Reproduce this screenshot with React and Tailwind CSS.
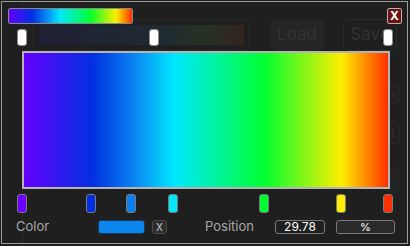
import React from 'react';

const grad =
  'linear-gradient(to right, #6400ff 0%, #0030e0 18.9%, #0a80f0 29.78%, #00e8ff 41.3%, #00ff30 66%, #ffee00 87.2%, #ff3000 100%)';

const stops = [
  { pos: 0, color: '#6a00ff' },
  { pos: 18.9, color: '#0030e0' },
  { pos: 29.78, color: '#0a80f0' },
  { pos: 41.3, color: '#00e8ff' },
  { pos: 66, color: '#00ff30' },
  { pos: 87.2, color: '#ffee00' },
  { pos: 100, color: '#ff3000' },
];

const alphaStops = [0, 36, 100];

const App = () => {
  return (
    <div className="relative w-[410px] h-[246px] bg-[#1f1f1f] overflow-hidden font-['Inter',sans-serif]">
      {/* Faded editor behind the popup */}
      <div className="absolute inset-0 pl-[22px]">
        <div className="h-full border-l border-[#2b2b2b] flex">
          <div className="flex-1 flex items-start gap-[20px] pl-[10px] pt-[19px]">
            <div className="w-[217px] h-[32px] rounded-md border border-[#2a2a2a] p-[5px]">
              <div className="h-full w-full bg-[linear-gradient(to_right,#201f35,#1f2a32_60%,#253222_80%,#33241f)]" />
            </div>
            <div className="w-[54px] h-[32px] rounded-md bg-[#252525] flex items-center justify-center text-[17px] text-[#323232]">
              Load
            </div>
          </div>
          <div className="w-[67px] flex flex-col items-start pt-[19px]">
            <div className="w-[54px] h-[32px] rounded-md border border-[#2b2b2b] flex items-center justify-center text-[17px] text-[#323232]">
              Save
            </div>
            <div className="ml-[43px] mt-[36px] w-[14px] h-[16px] rounded border border-[#282828] text-[12px] text-[#2e2e2e] flex items-center justify-center">x</div>
            <div className="ml-[43px] mt-[19px] w-[14px] h-[22px] rounded border border-[#282828] text-[12px] text-[#2e2e2e] flex items-center justify-center">t</div>
            <div className="ml-[43px] mt-[23px] w-[14px] h-[26px] rounded bg-[#232323]" />
          </div>
        </div>
      </div>

      {/* Popup */}
      <div className="absolute left-[1px] top-[1px] w-[407px] h-[243px] border border-[#9c9c9c]">
        <div className="flex items-center justify-between pl-[6px] pr-[5px] pt-[6px]">
          <div
            className="w-[125px] h-[16px] rounded-[2px] border border-[#8a8a8a]"
            style={{ background: grad }}
          />
          <div className="w-[15px] h-[16px] rounded-[2px] border border-[#b0b0b0] bg-[#6e1010] flex items-center justify-center text-white text-[12px] font-bold leading-none">
            X
          </div>
        </div>

        {/* Alpha stops */}
        <div className="relative ml-[20px] w-[366px] h-[17px] mt-[5px]">
          {alphaStops.map((p) => (
            <div
              key={p}
              className="absolute top-0 w-[10px] h-[17px] -translate-x-1/2 rounded-[3px] border border-[#8a8a8a] bg-white"
              style={{ left: `${p}%` }}
            />
          ))}
        </div>

        {/* Main gradient */}
        <div className="ml-[20px] mt-[5px] w-[368px] h-[138px] border-2 border-[#b4b4b4]" style={{ background: grad }} />

        {/* Color stops */}
        <div className="relative ml-[20px] w-[366px] h-[19px] mt-[5px]">
          {stops.map((s) => (
            <div
              key={s.pos}
              className="absolute top-0 w-[10px] h-[19px] -translate-x-1/2 rounded-[3px] border border-[#7a7a7a]"
              style={{ left: `${s.pos}%`, background: s.color }}
            />
          ))}
        </div>

        {/* Bottom row */}
        <div className="flex items-center h-[14px] mt-[7px] text-[13px] text-[#a8a8a8]">
          <span className="ml-[14px] w-[82px]">Color</span>
          <div className="w-[47px] h-[14px] rounded-[3px] border border-[#163a5c] bg-[#0a86ee]" />
          <div className="ml-[7px] w-[15px] h-[14px] rounded-[3px] border border-[#4a4a4a] bg-[#2c2c2c] flex items-center justify-center text-[10px] text-[#cfcfcf]">
            X
          </div>
          <span className="ml-[38px] w-[70px]">Position</span>
          <div className="w-[50px] h-[14px] rounded-[3px] border border-[#7a7a7a] flex items-center justify-center text-[12px] text-white">
            29.78
          </div>
          <div className="ml-[11px] w-[59px] h-[14px] rounded-[3px] border border-[#7a7a7a] bg-[#2a2a2a] flex items-center justify-center text-[11px] text-white">
            %
          </div>
        </div>
      </div>
    </div>
  );
};

export default App;
